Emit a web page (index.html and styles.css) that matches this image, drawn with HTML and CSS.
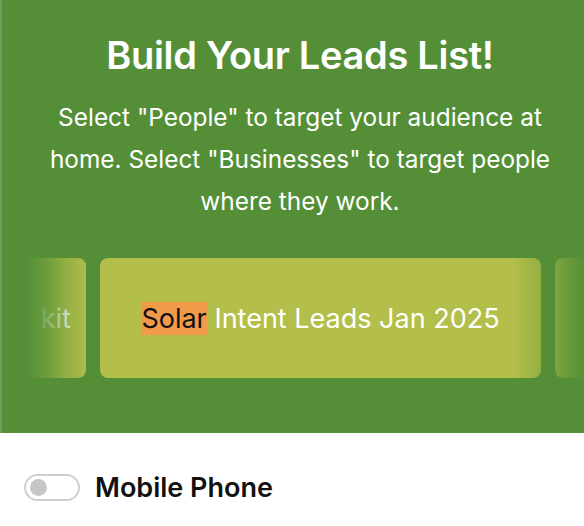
FILE: index.html
```html
<!DOCTYPE html>
<html lang="en">
<head>
    <meta charset="UTF-8">
    <meta name="viewport" content="width=device-width, initial-scale=1.0">
    <title>Build Your Leads List</title>
    <link rel="stylesheet" href="styles.css">
</head>
<body>
    <div class="hero">
        <h1>Build Your Leads List!</h1>
        <p class="intro">Select "People" to target your audience at home. Select "Businesses" to target people where they work.</p>

        <!-- list carousel -->
        <div class="carousel">
            <div class="track">
                <div class="card">Home Services Leads Starter kit</div>
                <div class="card"><span class="hl">Solar</span>&nbsp;Intent Leads Jan 2025</div>
                <div class="card">Roofing Leads Feb 2025</div>
            </div>
            <div class="fade fade-left"></div>
            <div class="fade fade-right"></div>
        </div>
    </div>

    <div class="options">
        <label class="switch-row">
            <span class="switch"><span class="knob"></span></span>
            <span class="switch-label">Mobile Phone</span>
        </label>
    </div>
</body>
</html>
```

FILE: styles.css
```css
* {
    margin: 0;
    padding: 0;
    box-sizing: border-box;
}

body {
    font-family: Inter, "Noto Sans", sans-serif;
    background: #fff;
    width: 584px;
    height: 526px;
    overflow: hidden;
}

.hero {
    background: #548f37;
    border-left: 2px solid #6f9d5a;
    height: 433px;
    padding-top: 33px;
    color: #fff;
    text-align: center;
}

.hero h1 {
    font-size: 38px;
    font-weight: 600;
    line-height: 44px;
    letter-spacing: -0.3px;
    padding-left: 14px;
}

.intro {
    margin: 19px auto 0;
    width: 520px;
    padding-left: 14px;
    font-size: 24.4px;
    line-height: 42px;
}

.carousel {
    position: relative;
    margin-top: 36px;
    overflow: hidden;
}

.track {
    display: flex;
    gap: 14px;
    margin-left: -357px;
}

.card {
    flex: 0 0 441px;
    height: 120px;
    border-radius: 8px;
    background: #b3bf4a;
    display: flex;
    align-items: center;
    justify-content: center;
    font-size: 27px;
    color: #fff;
    white-space: nowrap;
}

.hl {
    background: #f19a4a;
    color: #111;
}

.fade {
    position: absolute;
    top: 0;
    bottom: 0;
}

.fade-left {
    left: 0;
    width: 88px;
    background: linear-gradient(to right, #548f37 28%, rgba(84, 143, 55, 0.75) 50%, rgba(84, 143, 55, 0.3) 75%, rgba(84, 143, 55, 0));
}

.fade-right {
    right: 0;
    width: 70px;
    background: linear-gradient(to right, rgba(84, 143, 55, 0), rgba(84, 143, 55, 0.35) 40%, #548f37);
}

.options {
    padding: 38px 24px 0;
}

.switch-row {
    display: flex;
    align-items: center;
    gap: 15px;
}

.switch {
    width: 56px;
    height: 27px;
    border: 2px solid #cfcfcf;
    border-radius: 14px;
    display: flex;
    align-items: center;
    padding-left: 4px;
}

.knob {
    width: 17px;
    height: 17px;
    border-radius: 50%;
    background: #c6c6c6;
}

.switch-label {
    font-size: 27px;
    font-weight: 600;
    color: #111;
}
```
